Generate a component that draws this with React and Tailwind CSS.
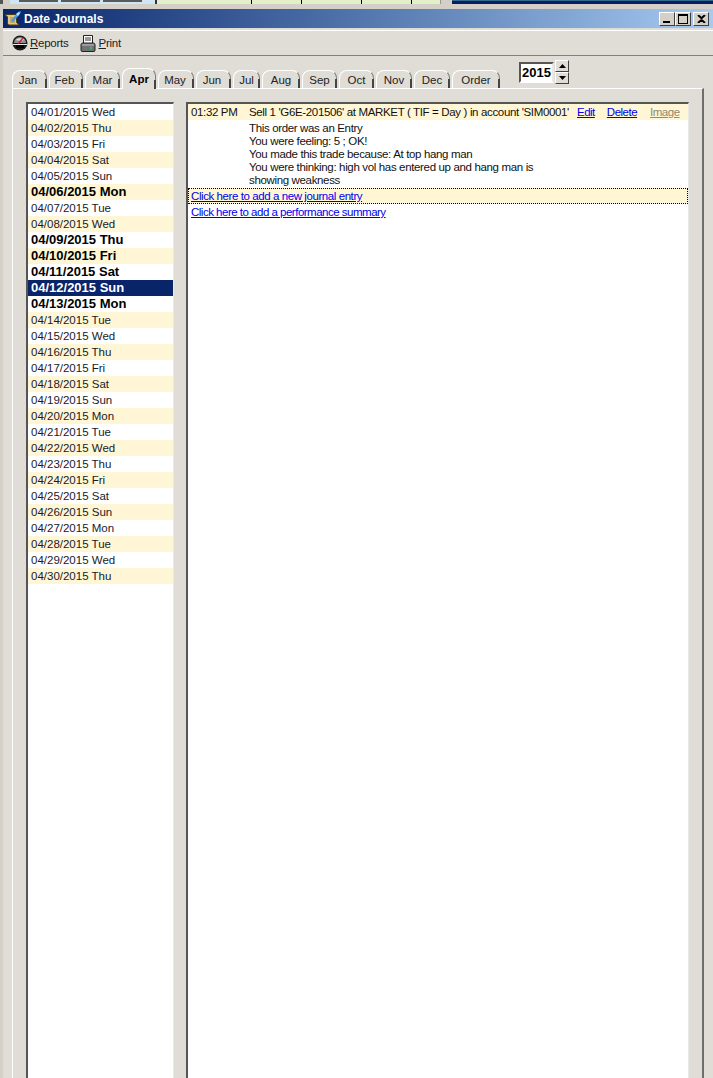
const MONTHS = [
  { label: "Jan", w: "w-[35px] pr-[3px]" },
  { label: "Feb", w: "w-[34px] pr-[3px]" },
  { label: "Mar", w: "w-[35px]" },
  { label: "Apr", w: "w-[34px]", active: true },
  { label: "May", w: "w-[36px] pr-[2px]" },
  { label: "Jun", w: "w-[35px] pr-[3px]" },
  { label: "Jul", w: "w-[27px]" },
  { label: "Aug", w: "w-[38px]" },
  { label: "Sep", w: "w-[35px]" },
  { label: "Oct", w: "w-[35px]" },
  { label: "Nov", w: "w-[36px]" },
  { label: "Dec", w: "w-[36px]" },
  { label: "Order", w: "w-[48px]" },
];

const DAY_NAMES = ["Wed", "Thu", "Fri", "Sat", "Sun", "Mon", "Tue"];
const BOLD_DAYS = [6, 9, 10, 11, 12, 13];

const DAYS = Array.from({ length: 30 }, (_, i) => {
  const day = i + 1;
  return {
    day,
    label: `04/${String(day).padStart(2, "0")}/2015 ${DAY_NAMES[i % 7]}`,
    bold: BOLD_DAYS.includes(day),
    selected: day === 12,
  };
});

const ENTRY_LINES = [
  "This order was an Entry",
  "You were feeling: 5 ; OK!",
  "You made this trade because: At top hang man",
  "You were thinking: high vol has entered up and hang man is",
  "showing weakness",
];

function ScrollIcon() {
  return (
    <svg width="18" height="18" viewBox="0 0 18 18" className="shrink-0">
      <path d="M1.500 4.500h10c1 0 1 1 1 2v5c0 1 .5 2 2 2.500v1H5.500c-1 0-2-1-2-2V7c0-1-2-1-2-2.500z" fill="#e3c67e" stroke="#4a3d1c" strokeWidth="1" />
      <path d="M6 8h5M6 10h5M6 12h5" stroke="#a08a4c" strokeWidth="1" />
      <path d="M7 11l7-9 3-1-1 3-7 8z" fill="#3f9bec" />
      <path d="M12 4l3-2 1 1-2 3z" fill="#c2e4ff" />
    </svg>
  );
}

function ReportsIcon() {
  return (
    <svg width="16" height="16" viewBox="0 0 16 16" className="shrink-0">
      <circle cx="8" cy="8" r="7.500" fill="#1a1a1a" />
      <path d="M2 8a6 6 0 0 1 12 0z" fill="#8c9094" />
      <path d="M4 4.500a5.500 4 0 0 1 8 0l-1 1H5z" fill="#dcdfe2" />
      <path d="M6 9l5-6" stroke="#d1202a" strokeWidth="1.300" />
      <rect x="1" y="9" width="14" height="1" fill="#e9e9e9" />
      <rect x="4" y="10" width="8" height="3" fill="#000" />
    </svg>
  );
}

function PrintIcon() {
  return (
    <svg width="16" height="17" viewBox="0 0 16 17" className="shrink-0">
      <path d="M3.500 .5h9v8h-9z" fill="#fff" stroke="#222" />
      <path d="M5 3h6M5 5h6" stroke="#333" />
      <path d="M1 9.500c0-1 1-1.500 2-1.500h10c1 0 2 .5 2 1.500v5.500c0 1-.5 1.500-1 1.500H2c-.5 0-1-.5-1-1.500z" fill="#6f7375" stroke="#222" />
      <path d="M2 10h12" stroke="#c4c7c9" />
      <rect x="10" y="12" width="2" height="2" fill="#35c94a" />
    </svg>
  );
}

function CaptionButton({ children }) {
  return (
    <div className="w-[16px] h-[14px] flex items-center justify-center bg-[#d4d0c8] border border-t-white border-l-white border-r-[#404040] border-b-[#404040]">
      {children}
    </div>
  );
}

function SpinButton({ up }) {
  return (
    <div className="w-[14px] h-[12px] flex items-center justify-center bg-[#e0ddd7] border border-t-white border-l-white border-r-[#404040] border-b-[#404040]">
      <svg width="7" height="4" viewBox="0 0 7 4">
        <path d={up ? "M3.500 0L7 4H0z" : "M0 0h7L3.500 4z"} fill="#000" />
      </svg>
    </div>
  );
}

function Tab({ label, w, active }) {
  return (
    <div className={`${w} relative bg-[#e0ddd7] border-t border-l border-white border-r border-r-[#808080] rounded-t-[8px] flex items-center justify-center ${active ? "h-[21px] -mb-px z-10 font-bold text-black" : "h-[18px] text-[#222]"}`}>
      {label}
      <div className="absolute -right-px bottom-0 w-[2px] h-[9px] bg-[#444]" />
    </div>
  );
}

export default function App() {
  return (
    <div className="w-[713px] h-[1078px] overflow-hidden bg-[#d4d0c8] flex flex-col text-[11.5px] leading-[16px] text-black font-['Liberation_Sans',Arial,sans-serif]">
      {/* Windows behind the dialog */}
      <div className="h-[4px] flex shrink-0">
        <div className="w-[3px] bg-[#555]" />
        <div className="w-[7px]" />
        <div className="w-[145px] bg-[#cfe6f7] flex gap-[3px] pl-[9px]">
          <div className="w-[39px] h-[2px] bg-[#5a5a5a]" />
          <div className="w-[39px] h-[2px] bg-[#5a5a5a]" />
          <div className="w-[39px] h-[2px] bg-[#5a5a5a]" />
        </div>
        <div className="w-[2px] bg-[#333]" />
        <div className="w-[284px] bg-[#e3efc9] border-r border-[#999] flex">
          <div className="w-[95px] h-[4px] border-r border-black" />
          <div className="w-[50px] h-[4px] border-r border-black" />
          <div className="w-[60px] h-[4px] border-r border-black" />
          <div className="w-[50px] h-[4px] border-r border-black" />
        </div>
        <div className="w-[11px]" />
        <div className="flex-1 bg-[#0a1a6b] border-t border-[#2f6d8a]" />
      </div>
      <div className="h-[5px] shrink-0" />

      {/* Dialog */}
      <div className="flex-1 min-h-0 ml-[3px] flex flex-col bg-[#e0ddd7]">
        <div className="h-[19px] shrink-0 flex items-center pl-[1px] pr-[4px] bg-gradient-to-r from-[#0a246a] to-[#a6caf0]">
          <ScrollIcon />
          <span className="ml-[2px] text-white font-bold text-[12px]">Date Journals</span>
          <div className="ml-auto flex items-center">
            <CaptionButton><div className="w-[7px] h-[2px] mt-[6px] -ml-[2px] bg-black" /></CaptionButton>
            <CaptionButton><div className="w-[10px] h-[10px] border border-t-2 border-black" /></CaptionButton>
            <div className="ml-[2px]">
              <CaptionButton>
                <svg width="9" height="8" viewBox="0 0 9 8">
                  <path d="M1 0l3.500 3.200L8 0M1 8l3.500-3.200L8 8" stroke="#000" strokeWidth="2" fill="none" />
                </svg>
              </CaptionButton>
            </div>
          </div>
        </div>

        {/* Toolbar */}
        <div className="h-[26px] mt-[2px] shrink-0 border-t border-white border-b border-b-[#808080] flex items-center pl-[9px] text-[#222] tracking-[-0.25px]">
          <div className="flex items-center gap-[3px]">
            <ReportsIcon />
            <span className="-ml-px"><u>R</u>eports</span>
          </div>
          <div className="flex items-center gap-[3px] ml-[11px]">
            <PrintIcon />
            <span><u>P</u>rint</span>
          </div>
        </div>

        {/* Month tabs and year */}
        <div className="h-[32px] shrink-0 flex items-end pl-[9px] gap-[2px]">
          {MONTHS.map((m) => (
            <Tab key={m.label} {...m} />
          ))}
          <div className="self-start mt-[4px] ml-[17px] flex items-start">
            <div className="w-[35px] h-[21px] mt-[2px] mr-px bg-white border-2 border-t-[#555] border-l-[#555] border-r-[#e8e8e8] border-b-white flex items-center justify-center font-bold text-[13px]">
              2015
            </div>
            <div className="flex flex-col">
              <SpinButton up />
              <SpinButton />
            </div>
          </div>
        </div>

        {/* Tab panel */}
        <div className="flex-1 min-h-0 ml-[9px] mr-[9px] border-t border-l border-white border-r-2 border-r-[#6e6e6e] pt-[13px] pl-[13px] pr-[13px] flex gap-[12px]">
          <div className="w-[148px] shrink-0 bg-white border-t-2 border-l-2 border-[#555] border-r border-r-[#e8e8e8]">
            {DAYS.map((d) => (
              <div
                key={d.day}
                className={`h-[16px] pl-[3px] leading-[16px] ${d.selected ? "bg-[#0a246a] text-white" : d.day % 2 === 0 ? "bg-[#fff6d5]" : "bg-white"} ${d.bold ? "font-bold text-[13px]" : "text-[#1a1a2a]"}`}
              >
                {d.label}
              </div>
            ))}
          </div>

          <div className="flex-1 bg-white border-t-2 border-l-2 border-[#555] border-r border-r-[#e8e8e8] tracking-[-0.35px] text-[#111]">
            <div className="h-[16px] bg-[#fff6d5] flex items-center pl-[3px]">
              <span className="w-[58px] shrink-0">01:32 PM</span>
              <span className="w-[328px] shrink-0 whitespace-nowrap">Sell 1 'G6E-201506' at MARKET ( TIF = Day ) in account 'SIM0001'</span>
              <a className="text-[#0000ee] underline tracking-[-0.5px]">Edit</a>
              <a className="ml-[12px] text-[#0000ee] underline tracking-[-0.5px]">Delete</a>
              <a className="ml-[13px] text-[#8f8a70] underline tracking-[-0.5px]">Image</a>
            </div>
            <div className="pl-[61px] pt-[2px] pb-[1px]">
              {ENTRY_LINES.map((line) => (
                <div key={line} className="h-[13px] leading-[13px]">{line}</div>
              ))}
            </div>
            <div className="h-[16px] bg-[#fff6d5] border border-dotted border-black flex items-center pl-[2px]">
              <a className="text-[#0000ee] underline tracking-[-0.42px]">Click here to add a new journal entry</a>
            </div>
            <div className="h-[16px] flex items-center pl-[3px]">
              <a className="text-[#0000ee] underline tracking-[-0.5px]">Click here to add a performance summary</a>
            </div>
          </div>
        </div>
      </div>
    </div>
  );
}
